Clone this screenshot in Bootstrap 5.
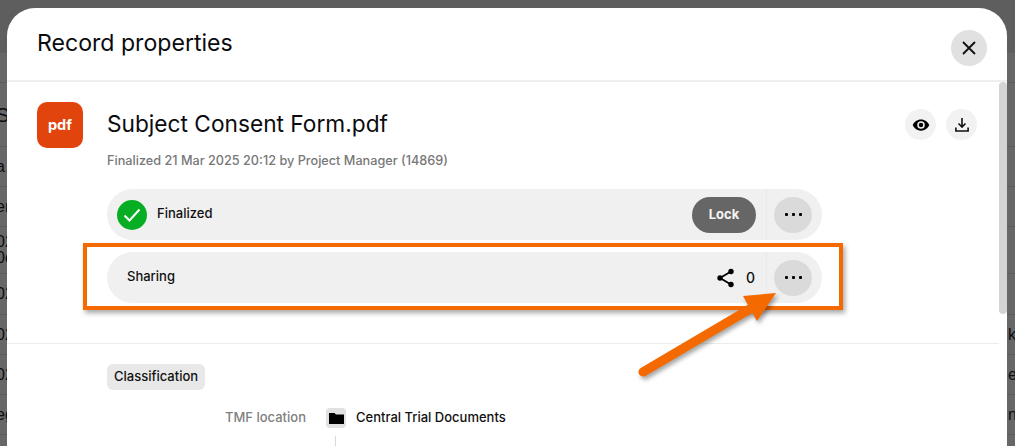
<!doctype html>
<html lang="en">
<head>
<meta charset="utf-8">
<title>Record properties</title>
<link href="https://cdn.jsdelivr.net/npm/bootstrap@5.3.0/dist/css/bootstrap.min.css" rel="stylesheet">
<style>
html,body{height:446px;overflow:hidden}
body{position:relative;width:1015px;background:#666;font-family:Inter,"Liberation Sans",sans-serif;color:#111}
.backdrop-page{height:446px;padding-top:53px;font-family:"Liberation Sans",Arial,sans-serif;font-size:16px;color:#0c0c12;background:linear-gradient(#5e5e5e 53px,#676767 53px)}
.bg-row{display:flex;justify-content:space-between;align-items:center;border-bottom:1px solid #5a5a5a;line-height:16px;height:40px;white-space:nowrap}
.bg-row span{display:block;margin-left:-4px}
.bg-row span+span{margin-right:0;width:7px;overflow:hidden}
.bg-r30{height:30px}
.bg-r64{height:64px;font-size:20px}
.bg-r47{height:47px}
.bg-r41{height:41px}
.sheet{position:absolute;left:7px;top:8px;width:1000px;height:438px;background:#fff;border-radius:28px 28px 0 0;overflow:hidden;display:flex;flex-direction:column;border:0}
.sheet-head{height:74px;flex:none;padding:0 20px 0 30px;border-bottom:2px solid #eee;display:flex;justify-content:space-between;align-items:flex-start}
.sheet-title{font-size:23.1px;font-weight:400;margin:21px 0 0;line-height:28px;color:#0b0b0f}
.close-round{width:36px;height:36px;margin-top:22px;border:0;border-radius:50%;background:#e1e1e1;padding:0;display:flex;align-items:center;justify-content:center}
.sheet-scroll{flex:1;position:relative;overflow:hidden}
.sb-thumb{position:absolute;right:0;top:0;width:8px;height:232px;background:#d4d4d4;border-radius:4px}
.rec-head{padding:20px 30px 0 30px;display:flex;width:1000px}
.pdf-tile{width:46px;height:46px;flex:none;background:#e2440e;color:#fff;border-radius:10px;font-weight:700;font-size:14.5px;display:flex;align-items:center;justify-content:center;margin-right:24px}
.rec-name{font-size:22.7px;line-height:30px;font-weight:400;margin:7px 0 0;color:#0b0b0f}
.rec-sub{font-size:12.7px;color:#787878;line-height:16px;margin-top:14px;font-weight:500}
.round-sm{width:31px;height:31px;border:0;border-radius:50%;background:#f2f2f2;padding:0;display:flex;align-items:center;justify-content:center}
.rec-actions{margin:7px 0 0 auto;gap:10px}
.pill-stack{margin:20px 0 0 100px;width:715px;gap:12px}
.pill-row{height:51px;background:#f0f0f0;border-radius:26px;display:flex;align-items:center;font-size:13px;font-weight:500}
.pill-main{flex:1;display:flex;align-items:center;height:100%;border-right:1px solid #e9e9e9;padding:0 11px 0 10px}
.pill-main-plain{padding-left:20px}
.pill-text{position:relative;top:-1px}
.pill-side{width:55px;flex:none;display:flex;align-items:center;padding-left:7px}
.dots-btn{width:38px;height:36px;border:0;border-radius:50%;background:#dadada;padding:0;display:flex;align-items:center;justify-content:center;gap:4px}
.dots-btn i{display:block;width:3px;height:3px;background:#000;border-radius:1px}
.ok-circle{width:30px;height:30px;border-radius:50%;background:#07ae24;display:flex;align-items:center;justify-content:center;margin-right:10px}
.lock-btn{width:64px;height:36px;border:0;border-radius:18px;background:#666;color:#f4f4f4;font-weight:700;font-size:13px;padding:0;position:relative;left:1px}
.share-count{font-size:14px;margin-left:11px}
.sep-line{border-top:1px solid #ececec;margin:40px 8px 0 0;width:992px;opacity:1}
.section-tag{display:inline-block;margin:20px 0 0 100px;background:#e8e8e8;border-radius:6px;height:26px;line-height:25px;padding:0 7px;font-size:13px;font-weight:500}
.field-row{display:flex;align-items:center;margin-top:18px}
.field-label{width:299px;text-align:right;font-size:13px;font-weight:500;color:#808080}
.folder-tile{width:20px;height:20px;background:#e1e1e1;border-radius:4px;margin-left:20px;display:flex;align-items:center;justify-content:center}
.field-value{margin-left:10px;font-size:13px;font-weight:500;color:#111}
.tree-tail{width:1px;height:10px;background:#d8d8d8;margin:8px 0 0 328px}
.mark-box{position:absolute;left:83px;top:243px;width:760px;height:67px;border:4px solid #f46a00;box-shadow:2px 3px 5px rgba(0,0,0,.35);pointer-events:none}
.mark-arrow{position:absolute;left:630px;top:285px;filter:drop-shadow(2px 3px 2px rgba(0,0,0,.35))}
</style>
</head>
<body>
<div class="backdrop-page" aria-hidden="true">
  <div class="bg-row bg-r30"></div>
  <div class="bg-row bg-r64"><span>S</span></div>
  <div class="bg-row"><span>a</span></div>
  <div class="bg-row"><span>er</span></div>
  <div class="bg-row bg-r47"><span>02<br>0c</span></div>
  <div class="bg-row bg-r41"><span>02</span></div>
  <div class="bg-row"><span>02</span><span>k</span></div>
  <div class="bg-row"><span>02</span><span>e</span></div>
  <div class="bg-row"><span>eg</span><span>n</span></div>
</div>

<div class="sheet modal-content">
  <div class="sheet-head">
    <h5 class="sheet-title">Record properties</h5>
    <button class="close-round" aria-label="Close">
      <svg width="14" height="14" viewBox="0 0 14 14"><path d="M1 1l12 12M13 1L1 13" stroke="#111" stroke-width="1.9" fill="none"/></svg>
    </button>
  </div>
  <div class="sheet-scroll">
    <div class="sb-thumb"></div>
    <div class="rec-head">
      <div class="pdf-tile">pdf</div>
      <div>
        <h5 class="rec-name">Subject Consent Form.pdf</h5>
        <div class="rec-sub">Finalized 21 Mar 2025 20:12 by Project Manager (14869)</div>
      </div>
      <div class="rec-actions d-flex align-items-start">
        <button class="round-sm" aria-label="Preview">
          <svg width="18" height="18" viewBox="0 0 24 24"><path fill="#000" d="M12 4.500C7 4.500 2.700 7.600 1 12c1.700 4.400 6 7.500 11 7.500s9.300-3.100 11-7.500c-1.700-4.400-6-7.500-11-7.500zM12 17a5 5 0 1 1 0-10 5 5 0 0 1 0 10zm0-8a3 3 0 1 0 0 6 3 3 0 0 0 0-6z"/></svg>
        </button>
        <button class="round-sm" aria-label="Download">
          <svg width="14" height="14" viewBox="0 0 14 14"><path d="M7 0v8.500M3.500 5.500L7 9l3.500-3.500M.9 9.500v3.500h12.200V9.500" stroke="#111" stroke-width="1.600" fill="none"/></svg>
        </button>
      </div>
    </div>

    <div class="pill-stack d-flex flex-column">
      <div class="pill-row">
        <div class="pill-main">
          <span class="ok-circle"><svg width="18" height="14" viewBox="0 0 18 14"><path d="M1.500 7.500l5 5L16.500 1.500" stroke="#fff" stroke-width="2" fill="none"/></svg></span>
          <span class="pill-text">Finalized</span>
          <button class="lock-btn ms-auto">Lock</button>
        </div>
        <div class="pill-side"><button class="dots-btn" aria-label="More"><i></i><i></i><i></i></button></div>
      </div>
      <div class="pill-row">
        <div class="pill-main pill-main-plain">
          <span class="pill-text">Sharing</span>
          <svg class="ms-auto" width="19" height="20" viewBox="0 0 18 20"><path d="M14.500 3.500L3.500 10l11 6.500" stroke="#000" stroke-width="1.800" fill="none"/><circle cx="14.500" cy="3.500" r="2.700"/><circle cx="3.500" cy="10" r="2.700"/><circle cx="14.500" cy="16.500" r="2.700"/></svg>
          <span class="share-count">0</span>
        </div>
        <div class="pill-side"><button class="dots-btn" aria-label="More"><i></i><i></i><i></i></button></div>
      </div>
    </div>

    <hr class="sep-line">
    <span class="section-tag">Classification</span>
    <div class="field-row">
      <div class="field-label">TMF location</div>
      <div class="folder-tile"><svg width="15" height="12" viewBox="0 0 15 12"><path d="M0 1h5.500l1.500 1.500h8V12H0z" fill="#000"/></svg></div>
      <div class="field-value">Central Trial Documents</div>
    </div>
    <div class="tree-tail"></div>
  </div>
</div>

<div class="mark-box"></div>
<svg class="mark-arrow" width="160" height="100" viewBox="630 285 160 100">
  <path d="M643 372L755 306" stroke="#f46a00" stroke-width="9" stroke-linecap="round" fill="none"/>
  <path d="M743 296L776 293L757 321z" fill="#f46a00"/>
</svg>
<script src="https://cdn.jsdelivr.net/npm/bootstrap@5.3.0/dist/js/bootstrap.bundle.min.js"></script>
</body>
</html>
